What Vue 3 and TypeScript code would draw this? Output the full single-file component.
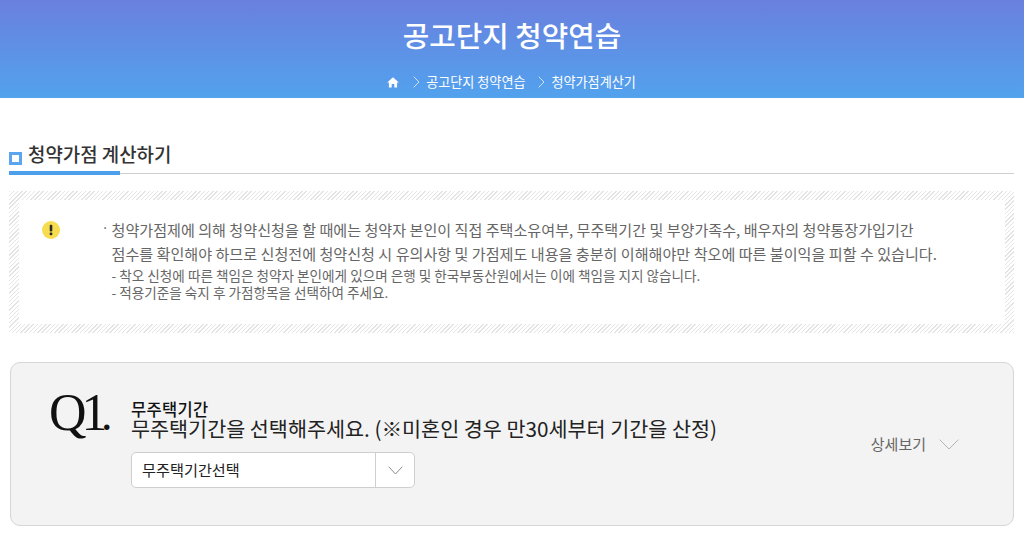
<script setup lang="ts">
const crumbs: string[] = ['공고단지 청약연습', '청약가점계산기']
</script>

<template>
  <div class="page">
    <header class="hero">
      <h1 class="hero-title">공고단지 청약연습</h1>
      <nav class="crumbs">
        <svg class="home" viewBox="0 0 12 11" width="12" height="11">
          <path d="M6 0.3 L0.2 5.6 H1.9 V10.6 H4.7 V7 H7.3 V10.6 H10.1 V5.6 H11.8 Z" fill="#fff" />
        </svg>
        <template v-for="(c, i) in crumbs" :key="c">
          <svg class="sep" :class="{ first: i === 0 }" viewBox="0 0 7 12" width="7" height="12">
            <path d="M0.7 0.7 L6 6 L0.7 11.3" fill="none" stroke="#cfe2f8" stroke-width="1" />
          </svg>
          <span class="crumb">{{ c }}</span>
        </template>
      </nav>
    </header>

    <main class="content">
      <div class="section-head">
        <span class="square"></span>
        <h2 class="section-title">청약가점 계산하기</h2>
      </div>

      <section class="notice">
        <div class="notice-inner">
          <svg class="warn" viewBox="0 0 18 18" width="18" height="18">
            <circle cx="9" cy="9" r="9" fill="#f7dc4f" />
            <rect x="7.7" y="3.8" width="2.6" height="6.8" rx="1" fill="#2b2b2b" />
            <rect x="7.7" y="11.6" width="2.6" height="2.6" rx="0.8" fill="#2b2b2b" />
          </svg>
          <div class="notice-body">
            <span class="dot">·</span>
            <div class="notice-text">
              <p class="main-line">청약가점제에 의해 청약신청을 할 때에는 청약자 본인이 직접 주택소유여부, 무주택기간 및 부양가족수, 배우자의 청약통장가입기간</p>
              <p class="main-line">점수를 확인해야 하므로 신청전에 청약신청 시 유의사항 및 가점제도 내용을 충분히 이해해야만 착오에 따른 불이익을 피할 수 있습니다.</p>
              <p class="sub-line first-sub">- 착오 신청에 따른 책임은 청약자 본인에게 있으며 은행 및 한국부동산원에서는 이에 책임을 지지 않습니다.</p>
              <p class="sub-line">- 적용기준을 숙지 후 가점항목을 선택하여 주세요.</p>
            </div>
          </div>
        </div>
      </section>

      <section class="question">
        <div class="q-num">Q1<span class="q-dot">.</span></div>
        <div class="q-body">
          <div class="q-label">무주택기간</div>
          <div class="q-text">무주택기간을 선택해주세요. (※미혼인 경우 만30세부터 기간을 산정)</div>
          <div class="select">
            <span class="select-value">무주택기간선택</span>
            <span class="select-btn">
              <svg viewBox="0 0 15 9" width="15" height="9">
                <path d="M0.7 0.7 L7.5 8 L14.3 0.7" fill="none" stroke="#8a8a8a" stroke-width="1" />
              </svg>
            </span>
          </div>
        </div>
        <div class="detail">
          <span>상세보기</span>
          <svg class="detail-arrow" viewBox="0 0 20 11" width="20" height="11">
            <path d="M0.6 0.6 L10 10 L19.4 0.6" fill="none" stroke="#b5b5b5" stroke-width="1" />
          </svg>
        </div>
      </section>
    </main>
  </div>
</template>

<style>
html, body { margin: 0; background: #fff; overflow: hidden; }
</style>

<style scoped>
.page {
  width: 1024px;
  height: 539px;
  overflow: hidden;
  background: #fff;
  font-family: "Noto Sans CJK KR", "Noto Sans", sans-serif;
}
.hero {
  height: 98px;
  box-sizing: border-box;
  background: linear-gradient(180deg, #6a80de 0%, #52a2ee 100%);
  color: #fff;
  text-align: center;
  padding-top: 15px;
}
.hero-title {
  margin: 0;
  font-size: 28.8px;
  line-height: 40px;
  font-weight: 500;
}
.crumbs {
  display: flex;
  justify-content: center;
  align-items: center;
  margin-top: 15px;
  height: 24px;
  font-size: 13.1px;
  padding-left: 2px;
}
.home { margin-right: 14px; margin-left: -3px; }
.sep { margin-right: 6px; margin-left: 13px; }
.sep.first { margin-left: 0; }
.crumb { line-height: 24px; }
.content { padding: 0 10px; }
.section-head {
  position: relative;
  display: flex;
  align-items: center;
  height: 30px;
  margin-top: 42px;
  border-bottom: 1px solid #cfcfcf;
  padding-bottom: 3px;
}
.section-head::after {
  content: "";
  position: absolute;
  left: -1px;
  bottom: -2px;
  width: 111px;
  height: 4px;
  background: #4d9fec;
}
.square {
  width: 7px;
  height: 7px;
  border: 3px solid #5aa5ee;
  margin-right: 6px;
  margin-top: 6px;
  margin-left: -1px;
}
.section-title {
  margin: 0 0 2px;
  font-size: 18.9px;
  font-weight: 500;
  color: #333;
  line-height: 26px;
}
.notice {
  margin: 17px 0 0 -1px;
  padding: 9px 9px 9px 10px;
  background: repeating-linear-gradient(135deg, #e4e4e4 0 1px, #fff 1px 3px);
}
.notice-inner {
  background: #fff;
  height: 124px;
  box-sizing: border-box;
  padding: 20px 0 0 23px;
  display: flex;
}
.warn { flex: none; margin-top: 1px; }
.notice-body { display: flex; margin-left: 41.5px; }
.dot {
  width: 10px;
  font-size: 13px;
  line-height: 15px;
  color: #555;
}
.notice-text { margin-top: -3px; }
.notice-text p { margin: 0; white-space: nowrap; }
.main-line {
  font-size: 15.1px;
  line-height: 24px;
  color: #666;
}
.sub-line {
  font-size: 13.6px;
  line-height: 17px;
  color: #666;
}
.first-sub { margin-top: 2px !important; }
.question {
  position: relative;
  margin-top: 29px;
  height: 164px;
  box-sizing: border-box;
  background: #f3f3f3;
  border: 1px solid #d6d6d6;
  border-radius: 10px;
  padding: 21px 0 0 39px;
  display: flex;
}
.q-num {
  font-family: "Liberation Serif", serif;
  font-size: 52px;
  line-height: 62px;
  letter-spacing: -5px;
  color: #111;
  width: 81px;
  height: 62px;
  flex: none;
  margin: -2px 1px 0 -1px;
}
.q-dot { font-weight: 700; font-size: 34px; letter-spacing: 0; }
.q-body { flex: 1; padding-top: 18px; }
.q-label {
  font-size: 16.5px;
  letter-spacing: 0.3px;
  line-height: 14px;
  font-weight: 500;
  color: #111;
}
.q-text {
  font-size: 20.7px;
  line-height: 25px;
  color: #222;
  white-space: nowrap;
}
.select {
  display: flex;
  width: 284px;
  height: 36px;
  margin-top: 11px;
  box-sizing: border-box;
  background: #fff;
  border: 1px solid #cfcfcf;
  border-radius: 5px;
}
.select-value {
  flex: 1;
  padding-left: 10px;
  font-size: 15.2px;
  line-height: 33px;
  color: #222;
}
.select-btn {
  width: 38px;
  border-left: 1px solid #cfcfcf;
  display: flex;
  align-items: center;
  justify-content: center;
}
.detail {
  position: absolute;
  right: 54px;
  top: 70px;
  display: flex;
  align-items: center;
  gap: 13px;
  font-size: 15px;
  color: #666;
}
.detail-arrow { margin-top: 2px; }
</style>
